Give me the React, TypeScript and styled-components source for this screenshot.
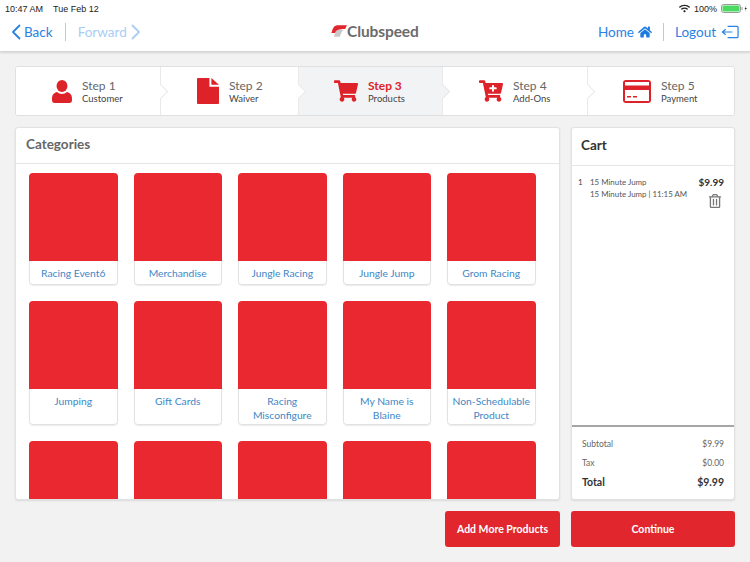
import React from "react";
import styled, { createGlobalStyle } from "styled-components";
import { FaShoppingCart, FaCartPlus, FaHome, FaRegTrashAlt, FaWifi } from "react-icons/fa";

const GlobalStyle = createGlobalStyle`
    html, body {
        margin: 0;
        padding: 0;
        background: #f2f2f2;
        font-family: Lato, "Open Sans", sans-serif;
    }
    * { box-sizing: border-box; }
`;

const Page = styled.div`
    width: 750px;
    height: 562px;
    overflow: hidden;
    display: flex;
    flex-direction: column;
`;

const Header = styled.header`
    height: 52px;
    background: #fff;
    border-bottom: 1px solid #d6d6d6;
    box-shadow: 0 1px 2px rgba(0, 0, 0, 0.12);
    display: flex;
    flex-direction: column;
    flex-shrink: 0;
`;

const StatusBar = styled.div`
    height: 17px;
    padding: 0 2px 0 5px;
    display: flex;
    align-items: center;
    justify-content: space-between;
    font-family: "Liberation Sans", sans-serif;
    font-size: 9px;
    color: #222;
`;

const StatusGroup = styled.div`
    display: flex;
    align-items: center;
    gap: 4px;
`;

const StatusTime = styled.span`
    margin-right: 6px;
`;

const NavBar = styled.nav`
    flex: 1;
    display: flex;
    align-items: center;
    justify-content: space-between;
    padding: 0 11px 4px 11px;
    position: relative;
`;

const NavGroup = styled.div`
    display: flex;
    align-items: center;
`;

const NavLink = styled.a<{ $muted?: boolean; $gap: number }>`
    display: flex;
    align-items: center;
    gap: ${(props) => props.$gap}px;
    font-size: 13.5px;
    color: ${(props) => (props.$muted ? "#a9cdf5" : "#2a82e4")};
`;

const NavDivider = styled.div<{ $space: number }>`
    width: 1px;
    height: 18px;
    background: #a9cdf5;
    margin: 0 ${(props) => props.$space}px;
`;

const Logo = styled.div`
    position: absolute;
    left: 331px;
    top: 5px;
    display: flex;
    align-items: center;
    font-size: 15.5px;
    font-weight: 700;
    letter-spacing: -0.1px;
    color: #6b6b6b;
`;

const Content = styled.main`
    flex: 1;
    padding: 14px 15px 0;
    display: flex;
    flex-direction: column;
`;

const Steps = styled.div`
    height: 50px;
    display: flex;
    flex-shrink: 0;
    background: #fff;
    border: 1px solid #e0e0e0;
    border-radius: 3px;
    overflow: hidden;
`;

const Step = styled.div<{ $width: number; $active?: boolean; $pad: number }>`
    width: ${(props) => props.$width}px;
    position: relative;
    display: flex;
    align-items: center;
    gap: 10px;
    padding-left: ${(props) => props.$pad}px;
    background: ${(props) => (props.$active ? "#f2f3f5" : "#fff")};
    border-right: 1px solid #e9e9e9;

    &:last-child { border-right: none; flex: 1; }

    &:not(:last-child)::after {
        content: "";
        position: absolute;
        right: -6px;
        top: 19px;
        width: 10px;
        height: 10px;
        background: ${(props) => (props.$active ? "#f2f3f5" : "#fff")};
        border-top: 1px solid #e9e9e9;
        border-right: 1px solid #e9e9e9;
        transform: rotate(45deg);
        z-index: 1;
    }
`;

const StepIcon = styled.div`
    display: flex;
    align-items: center;
    justify-content: center;
    color: #dd2329;
    flex-shrink: 0;
`;

const StepText = styled.div`
    display: flex;
    flex-direction: column;
`;

const StepTitle = styled.div<{ $active?: boolean }>`
    font-size: 12px;
    line-height: 14px;
    font-weight: ${(props) => (props.$active ? 700 : 400)};
    color: ${(props) => (props.$active ? "#dd2329" : "#666")};
`;

const StepName = styled.div`
    font-size: 9.5px;
    line-height: 11px;
    color: #444;
`;

const Columns = styled.div`
    display: flex;
    gap: 11px;
    margin-top: 11px;
    height: 373px;
    flex-shrink: 0;
`;

const Panel = styled.section<{ $width: number }>`
    width: ${(props) => props.$width}px;
    background: #fff;
    border: 1px solid #e2e2e2;
    border-radius: 3px;
    box-shadow: 0 1px 2px rgba(0, 0, 0, 0.1);
    display: flex;
    flex-direction: column;
    overflow: hidden;
`;

const CategoriesHeader = styled.h2`
    margin: 0;
    height: 36px;
    flex-shrink: 0;
    padding: 0 0 3px 10px;
    display: flex;
    align-items: center;
    font-size: 13.5px;
    font-weight: 700;
    color: #666;
    border-bottom: 1px solid #e6e6e6;
`;

const CardGrid = styled.div`
    display: grid;
    flex-shrink: 0;
    grid-template-columns: repeat(5, 88.5px);
    column-gap: 16px;
    row-gap: 16px;
    padding: 9px 0 0 13px;
    align-items: stretch;
`;

const Card = styled.div`
    border-radius: 4px;
    box-shadow: 0 1px 1px rgba(0, 0, 0, 0.08);
    overflow: hidden;
    display: flex;
    flex-direction: column;
    min-height: 112px;
`;

const CardImage = styled.div`
    height: 88px;
    background: #ea282f;
    flex-shrink: 0;
`;

const CardLabel = styled.div`
    flex: 1;
    padding: 5px 2px 2px;
    text-align: center;
    font-size: 10.3px;
    line-height: 14px;
    color: #4187c6;
    border: 1px solid #e2e2e2;
    border-top: none;
    border-radius: 0 0 4px 4px;
`;

const CartHeader = styled.h2`
    margin: 0;
    height: 38px;
    flex-shrink: 0;
    padding: 0 0 4px 9px;
    display: flex;
    align-items: center;
    font-size: 13.5px;
    font-weight: 700;
    color: #333;
    border-bottom: 1px solid #e6e6e6;
`;

const CartBody = styled.div`
    flex: 1;
    display: flex;
    justify-content: space-between;
    padding: 11px 10px 0 6px;
    border-bottom: 2px solid #a6a6a6;
`;

const CartQty = styled.div`
    width: 12px;
    font-size: 8px;
    line-height: 11.5px;
    color: #444;
`;

const CartInfo = styled.div`
    flex: 1;
    font-size: 7.9px;
    line-height: 11.5px;
    color: #555;
`;

const CartSide = styled.div`
    display: flex;
    flex-direction: column;
    align-items: flex-end;
    gap: 7px;
`;

const CartPrice = styled.div`
    font-size: 10px;
    line-height: 10px;
    font-weight: 700;
    color: #333;
`;

const TrashWrap = styled.div`
    display: flex;
    color: #777;
    margin-right: 2px;
`;

const Totals = styled.div`
    height: 72px;
    flex-shrink: 0;
    padding: 10px 10px 0;
    display: flex;
    flex-direction: column;
    gap: 6px;
`;

const TotalRow = styled.div<{ $strong?: boolean }>`
    display: flex;
    justify-content: space-between;
    align-items: center;
    height: 13px;
    font-size: ${(props) => (props.$strong ? "10.5px" : "8.5px")};
    font-weight: ${(props) => (props.$strong ? 700 : 400)};
    color: ${(props) => (props.$strong ? "#333" : "#666")};
`;

const Actions = styled.div`
    display: flex;
    justify-content: flex-end;
    gap: 11px;
    margin-top: 11px;
`;

const ActionButton = styled.button<{ $width: number }>`
    width: ${(props) => props.$width}px;
    height: 36px;
    border: none;
    border-radius: 3px;
    background: #e1262d;
    color: #fff;
    font-family: inherit;
    font-size: 10.5px;
    font-weight: 700;
`;

const Chevron = ({ dir, color }: { dir: "left" | "right"; color: string }) => (
    <svg width="10" height="16" viewBox="0 0 10 16" fill="none">
        <path
            d={dir === "left" ? "M8.5 1.5 2 8l6.5 6.5" : "M1.5 1.5 8 8l-6.5 6.5"}
            stroke={color}
            strokeWidth="1.8"
            strokeLinecap="round"
            strokeLinejoin="round"
        />
    </svg>
);

const LogoutIcon = () => (
    <svg width="18" height="14" viewBox="0 0 19 14" fill="none" stroke="#2a82e4" strokeWidth="1.3">
        <path d="M7 1h10a1 1 0 0 1 1 1v10a1 1 0 0 1-1 1H7" />
        <path d="M12 7H2M5 4 1.5 7 5 10" strokeLinejoin="round" />
    </svg>
);

const Battery = () => (
    <svg width="27" height="9" viewBox="0 0 27 9">
        <rect x="0.5" y="0.5" width="19" height="8" rx="2" fill="none" stroke="#999" />
        <rect x="1.5" y="1.5" width="17" height="6" rx="1" fill="#4cd964" />
        <rect x="20.5" y="3" width="1" height="3" fill="#999" />
        <path d="M25.5 1.2 23.6 5h1.2L24 7.8 25.8 4h-1.2z" fill="#222" />
    </svg>
);

const LogoMark = () => (
    <svg width="16" height="14" viewBox="0 0 17 14">
        <path d="M17 1H7.5C4 1 2 3 .8 8.5L0 9h4.5C6 5.5 9 4.8 15 4.8z" fill="#e1262d" />
        <path d="M14 6H8C5.8 6 4.8 7.5 4.2 9.5L3 13h6.5c1.2-3.5 2.5-7 4.5-7z" fill="#c9c9c9" />
    </svg>
);

const PersonIcon = () => (
    <svg width="20" height="23" viewBox="0 0 22 23" fill="currentColor" preserveAspectRatio="none">
        <circle cx="11" cy="6" r="6" />
        <path d="M0 18.5C0 14.5 2.8 12.5 5.5 12c1.5 1.2 3.5 2 5.5 2s4-.8 5.5-2c2.7.5 5.5 2.5 5.5 6.5V20a3 3 0 0 1-3 3H3a3 3 0 0 1-3-3z" />
    </svg>
);

const FileIcon = () => (
    <svg width="22" height="26" viewBox="0 0 23 27" fill="currentColor">
        <path d="M1 0h12v9h10v17a1 1 0 0 1-1 1H1a1 1 0 0 1-1-1V1a1 1 0 0 1 1-1z" />
        <path d="M15 0l8 7h-8z" />
    </svg>
);

const CardIcon = () => (
    <svg width="28" height="23" viewBox="0 0 28 23">
        <rect x="0" y="0" width="28" height="23" rx="3" fill="currentColor" />
        <rect x="2" y="2" width="24" height="3.5" fill="#fff" />
        <rect x="2" y="10" width="24" height="11" fill="#fff" />
        <rect x="4" y="16" width="4" height="1.5" fill="currentColor" />
        <rect x="10" y="16" width="4" height="1.5" fill="currentColor" />
    </svg>
);

type StepData = {
    title: string;
    name: string;
    width: number;
    pad: number;
    icon: React.ReactNode;
    active?: boolean;
};

const steps: StepData[] = [
    { title: "Step 1", name: "Customer", width: 145, pad: 36, icon: <PersonIcon /> },
    { title: "Step 2", name: "Waiver", width: 138, pad: 36, icon: <FileIcon /> },
    { title: "Step 3", name: "Products", width: 144, pad: 35, icon: <FaShoppingCart size={24} />, active: true },
    { title: "Step 4", name: "Add-Ons", width: 145, pad: 36, icon: <FaCartPlus size={24} /> },
    { title: "Step 5", name: "Payment", width: 147, pad: 35, icon: <CardIcon /> },
];

const categories = [
    "Racing Event6",
    "Merchandise",
    "Jungle Racing",
    "Jungle Jump",
    "Grom Racing",
    "Jumping",
    "Gift Cards",
    "Racing Misconfigure",
    "My Name is Blaine",
    "Non-Schedulable Product",
    "",
    "",
    "",
    "",
    "",
];

export default function App() {
    return (
        <Page>
            <GlobalStyle />
            <Header>
                <StatusBar>
                    <StatusGroup>
                        <StatusTime>10:47 AM</StatusTime>
                        <span>Tue Feb 12</span>
                    </StatusGroup>
                    <StatusGroup>
                        <FaWifi size={11} color="#222" />
                        <span>100%</span>
                        <Battery />
                    </StatusGroup>
                </StatusBar>
                <NavBar>
                    <NavGroup>
                        <NavLink $gap={3}>
                            <Chevron dir="left" color="#2a82e4" />
                            Back
                        </NavLink>
                        <NavDivider $space={12} />
                        <NavLink $muted $gap={4}>
                            Forward
                            <Chevron dir="right" color="#a9cdf5" />
                        </NavLink>
                    </NavGroup>
                    <Logo>
                        <LogoMark />
                        Clubspeed
                    </Logo>
                    <NavGroup>
                        <NavLink $gap={4}>
                            Home
                            <FaHome size={14} color="#1f7ae0" />
                        </NavLink>
                        <NavDivider $space={11} />
                        <NavLink $gap={5}>
                            Logout
                            <LogoutIcon />
                        </NavLink>
                    </NavGroup>
                </NavBar>
            </Header>
            <Content>
                <Steps>
                    {steps.map((step) => (
                        <Step key={step.title} $width={step.width} $pad={step.pad} $active={step.active}>
                            <StepIcon>{step.icon}</StepIcon>
                            <StepText>
                                <StepTitle $active={step.active}>{step.title}</StepTitle>
                                <StepName>{step.name}</StepName>
                            </StepText>
                        </Step>
                    ))}
                </Steps>
                <Columns>
                    <Panel $width={545}>
                        <CategoriesHeader>Categories</CategoriesHeader>
                        <CardGrid>
                            {categories.map((label, index) => (
                                <Card key={index}>
                                    <CardImage />
                                    <CardLabel>{label}</CardLabel>
                                </Card>
                            ))}
                        </CardGrid>
                    </Panel>
                    <Panel $width={164}>
                        <CartHeader>Cart</CartHeader>
                        <CartBody>
                            <CartQty>1</CartQty>
                            <CartInfo>
                                15 Minute Jump
                                <br />
                                15 Minute Jump | 11:15 AM
                            </CartInfo>
                            <CartSide>
                                <CartPrice>$9.99</CartPrice>
                                <TrashWrap>
                                    <FaRegTrashAlt size={14} />
                                </TrashWrap>
                            </CartSide>
                        </CartBody>
                        <Totals>
                            <TotalRow>
                                <span>Subtotal</span>
                                <span>$9.99</span>
                            </TotalRow>
                            <TotalRow>
                                <span>Tax</span>
                                <span>$0.00</span>
                            </TotalRow>
                            <TotalRow $strong>
                                <span>Total</span>
                                <span>$9.99</span>
                            </TotalRow>
                        </Totals>
                    </Panel>
                </Columns>
                <Actions>
                    <ActionButton $width={115}>Add More Products</ActionButton>
                    <ActionButton $width={164}>Continue</ActionButton>
                </Actions>
            </Content>
        </Page>
    );
}
